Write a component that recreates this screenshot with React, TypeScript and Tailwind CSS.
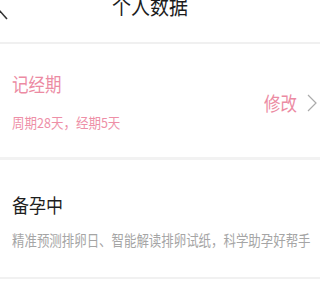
const cjk = { fontFamily: '"Noto Sans CJK SC", "Noto Sans", sans-serif' };

export default function App() {
  return (
    <div className="w-[320px] h-[303px] bg-white overflow-hidden" style={cjk}>
      {/* header, cropped at the top */}
      <div className="h-[42px] flex items-start">
        <svg width="8" height="22" viewBox="0 0 8 22" className="shrink-0">
          <path d="M-1 10 L7 19" stroke="#333" strokeWidth="1.6" fill="none" />
        </svg>
        <div className="ml-[104px] -mt-[5px] text-[19px] leading-[19px] text-[#1c1c1c] scale-y-[1.15]">个人数据</div>
      </div>
      <div className="h-[2px] bg-[#f0f0f0]" />

      <div className="h-[113px] flex justify-between pl-3 pr-[3px]">
        <div className="flex flex-col pt-[32px]">
          <div className="text-[16.5px] leading-[17px] text-[#ec8ba3] scale-y-[1.18] origin-center">记经期</div>
          <div className="mt-[23px] text-[12.5px] leading-[13px] text-[#ee8fa7] scale-y-[1.08]">周期28天，经期5天</div>
        </div>
        <div className="flex items-center gap-[10px] mt-[5px]">
          <span className="text-[16.5px] leading-[17px] text-[#ec8ba3] scale-y-[1.18]">修改</span>
          <svg width="10" height="18" viewBox="0 0 10 18" className="shrink-0">
            <path d="M1 1 L9 9 L1 17" stroke="#ababab" strokeWidth="1.2" fill="none" />
          </svg>
        </div>
      </div>
      <div className="h-[3px] bg-[#f2f2f2]" />

      <div className="h-[117px] pl-3 pt-[36px]">
        <div className="text-[17px] leading-[17px] text-[#1e1e1e] scale-y-[1.15] origin-left">备孕中</div>
        <div className="mt-[21px] text-[12.45px] leading-[13px] text-[#a5a5a5] whitespace-nowrap scale-y-[1.2] origin-left">
          精准预测排卵日、智能解读排卵试纸，科学助孕好帮手
        </div>
      </div>
      <div className="h-[2px] bg-[#f1f1f1]" />
    </div>
  );
}
